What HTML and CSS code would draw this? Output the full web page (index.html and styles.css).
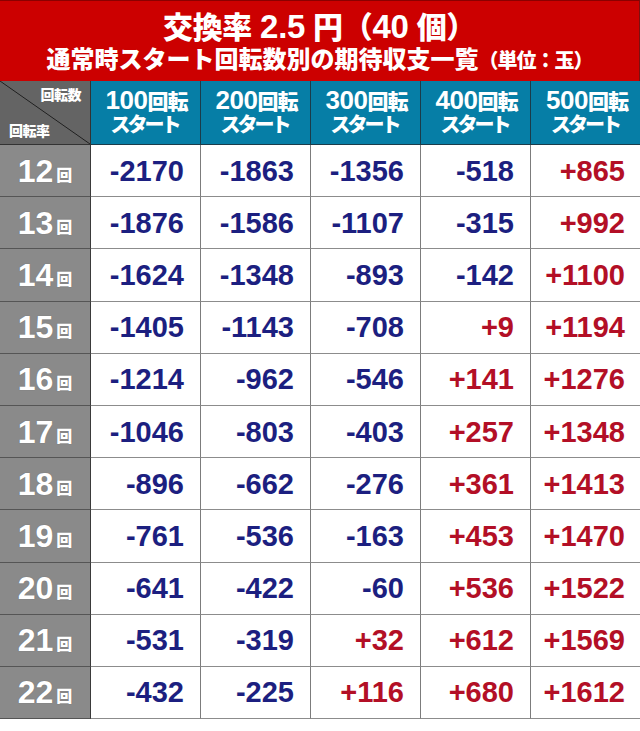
FILE: index.html
```html
<!DOCTYPE html>
<html lang="ja">
<head>
<meta charset="utf-8">
<title>交換率 2.5 円（40 個）</title>
<link rel="stylesheet" href="styles.css">
</head>
<body>
<div class="sheet">
  <header class="banner">
    <h1 class="title">交換率 <span class="num">2.5</span> 円（<span class="num">40</span> 個）</h1>
    <p class="subtitle">通常時スタート回転数別の期待収支一覧<span class="unit">（単位：玉）</span></p>
  </header>
  <div class="grid">
    <div class="corner"><span class="c-top">回転数</span><span class="c-bot">回転率</span></div>
    <div class="colhead"><span class="l1"><b>100</b>回転</span><span class="l2">スタート</span></div>
    <div class="colhead"><span class="l1"><b>200</b>回転</span><span class="l2">スタート</span></div>
    <div class="colhead"><span class="l1"><b>300</b>回転</span><span class="l2">スタート</span></div>
    <div class="colhead"><span class="l1"><b>400</b>回転</span><span class="l2">スタート</span></div>
    <div class="colhead last"><span class="l1"><b>500</b>回転</span><span class="l2">スタート</span></div>

    <div class="rowhead"><b>12</b><small>回</small></div>
    <div class="cell neg">-2170</div><div class="cell neg">-1863</div><div class="cell neg">-1356</div><div class="cell neg">-518</div><div class="cell pos last">+865</div>

    <div class="rowhead"><b>13</b><small>回</small></div>
    <div class="cell neg">-1876</div><div class="cell neg">-1586</div><div class="cell neg">-1107</div><div class="cell neg">-315</div><div class="cell pos last">+992</div>

    <div class="rowhead"><b>14</b><small>回</small></div>
    <div class="cell neg">-1624</div><div class="cell neg">-1348</div><div class="cell neg">-893</div><div class="cell neg">-142</div><div class="cell pos last">+1100</div>

    <div class="rowhead"><b>15</b><small>回</small></div>
    <div class="cell neg">-1405</div><div class="cell neg">-1143</div><div class="cell neg">-708</div><div class="cell pos">+9</div><div class="cell pos last">+1194</div>

    <div class="rowhead"><b>16</b><small>回</small></div>
    <div class="cell neg">-1214</div><div class="cell neg">-962</div><div class="cell neg">-546</div><div class="cell pos">+141</div><div class="cell pos last">+1276</div>

    <div class="rowhead"><b>17</b><small>回</small></div>
    <div class="cell neg">-1046</div><div class="cell neg">-803</div><div class="cell neg">-403</div><div class="cell pos">+257</div><div class="cell pos last">+1348</div>

    <div class="rowhead"><b>18</b><small>回</small></div>
    <div class="cell neg">-896</div><div class="cell neg">-662</div><div class="cell neg">-276</div><div class="cell pos">+361</div><div class="cell pos last">+1413</div>

    <div class="rowhead"><b>19</b><small>回</small></div>
    <div class="cell neg">-761</div><div class="cell neg">-536</div><div class="cell neg">-163</div><div class="cell pos">+453</div><div class="cell pos last">+1470</div>

    <div class="rowhead"><b>20</b><small>回</small></div>
    <div class="cell neg">-641</div><div class="cell neg">-422</div><div class="cell neg">-60</div><div class="cell pos">+536</div><div class="cell pos last">+1522</div>

    <div class="rowhead"><b>21</b><small>回</small></div>
    <div class="cell neg">-531</div><div class="cell neg">-319</div><div class="cell pos">+32</div><div class="cell pos">+612</div><div class="cell pos last">+1569</div>

    <div class="rowhead"><b>22</b><small>回</small></div>
    <div class="cell neg">-432</div><div class="cell neg">-225</div><div class="cell pos">+116</div><div class="cell pos">+680</div><div class="cell pos last">+1612</div>
  </div>
</div>
</body>
</html>
```
FILE: styles.css
```css
html, body {
  margin: 0;
  padding: 0;
  background: #ffffff;
}
body {
  font-family: "Liberation Sans", "Noto Sans CJK JP", sans-serif;
  font-weight: bold;
}
.sheet {
  width: 640px;
}
.banner {
  box-sizing: border-box;
  height: 81px;
  background: #cc0000;
  border-top: 1px solid #8a0000;
  border-right: 1px solid #7a1010;
  color: #ffffff;
  display: flex;
  flex-direction: column;
  align-items: center;
  justify-content: center;
  gap: 1px;
  padding-top: 2px;
}
.title {
  margin: 0;
  font-size: 30px;
  line-height: 34px;
  font-weight: 900;
  letter-spacing: -0.3px;
}
.title .num {
  font-size: 33px;
}
.subtitle {
  margin: 0;
  font-size: 24px;
  line-height: 28px;
  font-weight: 900;
  letter-spacing: 0;
}
.subtitle .unit {
  font-size: 20px;
  letter-spacing: -1px;
}
.grid {
  display: grid;
  grid-template-columns: 91px repeat(5, 110px);
  grid-template-rows: 64px repeat(11, 52.2px);
}
.corner {
  box-sizing: border-box;
  border-right: 1px solid #333333;
  border-bottom: 1px solid #333333;
  background: linear-gradient(to top right, #646464 calc(50% - 0.8px), #1e1e1e 50%, #646464 calc(50% + 0.8px));
  color: #ffffff;
  font-size: 14px;
  font-weight: 900;
  display: flex;
  flex-direction: column;
  justify-content: space-between;
  padding: 3px 9px 4px 9px;
}
.c-top {
  align-self: flex-end;
  letter-spacing: -0.5px;
}
.c-bot {
  align-self: flex-start;
  letter-spacing: -0.5px;
}
.colhead {
  box-sizing: border-box;
  background: #067ea6;
  border-right: 1px solid #1b3c4a;
  border-bottom: 1px solid #1b3c4a;
  color: #ffffff;
  display: flex;
  flex-direction: column;
  align-items: center;
  justify-content: center;
  padding-bottom: 1px;
  font-weight: 900;
}
.colhead.last {
  border-right: none;
}
.colhead .l1 {
  font-size: 21px;
  line-height: 25px;
  letter-spacing: -1px;
  padding-left: 2px;
}
.colhead .l1 b {
  font-size: 26px;
  letter-spacing: -0.5px;
}
.colhead .l2 {
  font-size: 20px;
  line-height: 23px;
  letter-spacing: -3px;
  padding-right: 2px;
}
.rowhead {
  box-sizing: border-box;
  background: #8a8a8a;
  border-right: 1px solid #3a3a3a;
  border-bottom: 1px solid #555555;
  color: #ffffff;
  display: flex;
  align-items: center;
  justify-content: center;
  gap: 3px;
  text-shadow: 0 0 1px rgba(0,0,0,0.25);
}
.rowhead b {
  font-size: 32px;
  line-height: 1;
}
.rowhead small {
  font-size: 16px;
  line-height: 1;
  margin-top: 10px;
  font-weight: 900;
}
.cell {
  box-sizing: border-box;
  background: #ffffff;
  border-right: 1px solid #7c7c7c;
  border-bottom: 1px solid #8c8c8c;
  font-size: 29px;
  display: flex;
  align-items: center;
  justify-content: flex-end;
  padding-right: 16px;
  padding-top: 1px;
}
.cell.last {
  border-right: none;
}
.neg {
  color: #1c1f80;
}
.pos {
  color: #b30f26;
}
```
